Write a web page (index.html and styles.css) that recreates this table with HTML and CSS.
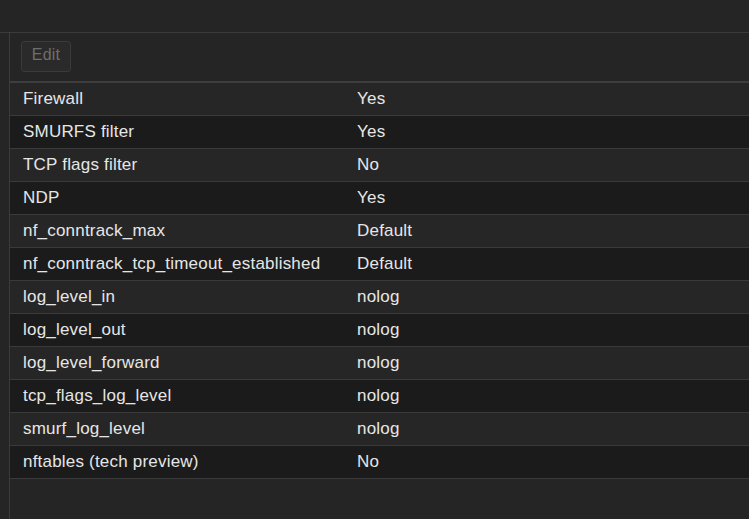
FILE: index.html
```html
<!DOCTYPE html>
<html>
<head>
<meta charset="utf-8">
<link rel="stylesheet" href="styles.css">
</head>
<body>
<div class="topbar"></div>
<div class="main">
  <div class="gutter"></div>
  <div class="panel">
    <div class="toolbar"><button class="btn">Edit</button></div>
    <div class="table">
      <div class="row"><div class="k">Firewall</div><div class="v">Yes</div></div>
      <div class="row"><div class="k">SMURFS filter</div><div class="v">Yes</div></div>
      <div class="row"><div class="k">TCP flags filter</div><div class="v">No</div></div>
      <div class="row"><div class="k">NDP</div><div class="v">Yes</div></div>
      <div class="row"><div class="k">nf_conntrack_max</div><div class="v">Default</div></div>
      <div class="row"><div class="k">nf_conntrack_tcp_timeout_established</div><div class="v">Default</div></div>
      <div class="row"><div class="k">log_level_in</div><div class="v">nolog</div></div>
      <div class="row"><div class="k">log_level_out</div><div class="v">nolog</div></div>
      <div class="row"><div class="k">log_level_forward</div><div class="v">nolog</div></div>
      <div class="row"><div class="k">tcp_flags_log_level</div><div class="v">nolog</div></div>
      <div class="row"><div class="k">smurf_log_level</div><div class="v">nolog</div></div>
      <div class="row"><div class="k">nftables (tech preview)</div><div class="v">No</div></div>
    </div>
  </div>
</div>
</body>
</html>
```
FILE: styles.css
```css
html, body {
  margin: 0;
  padding: 0;
  height: 100%;
  background: #252525;
  font-family: "Liberation Sans", Arial, sans-serif;
  font-size: 17px;
  letter-spacing: 0.2px;
  color: #e6e6e6;
}
.topbar {
  height: 32px;
  border-bottom: 1px solid #3b3b3b;
  background: #252525;
}
.main {
  display: flex;
  height: calc(100% - 33px);
}
.gutter {
  width: 9px;
  flex: none;
}
.panel {
  flex: 1;
  border-left: 1px solid #3b3b3b;
  background: #252525;
}
.toolbar {
  padding: 8px 11px 9px;
  border-bottom: 2px solid #3e3e3e;
  display: flex;
}
.btn {
  width: 50px;
  height: 31px;
  background: #2a2a2a;
  border: 1px solid #3a3a3a;
  border-radius: 3px;
  color: #6e6e6e;
  font-family: "Liberation Sans", Arial, sans-serif;
  font-size: 16px;
  letter-spacing: 0.2px;
  padding: 0 0 3px;
  line-height: 26px;
}
.table {
  display: flex;
  flex-direction: column;
}
.row {
  display: grid;
  grid-template-columns: 334px 1fr;
  height: 32px;
  align-items: center;
  border-bottom: 1px solid #3a3a3a;
  background: #262626;
}
.row:nth-child(even) {
  background: #1b1b1b;
}
.k {
  padding-left: 13px;
}
.v {
  padding-left: 13px;
}
```
